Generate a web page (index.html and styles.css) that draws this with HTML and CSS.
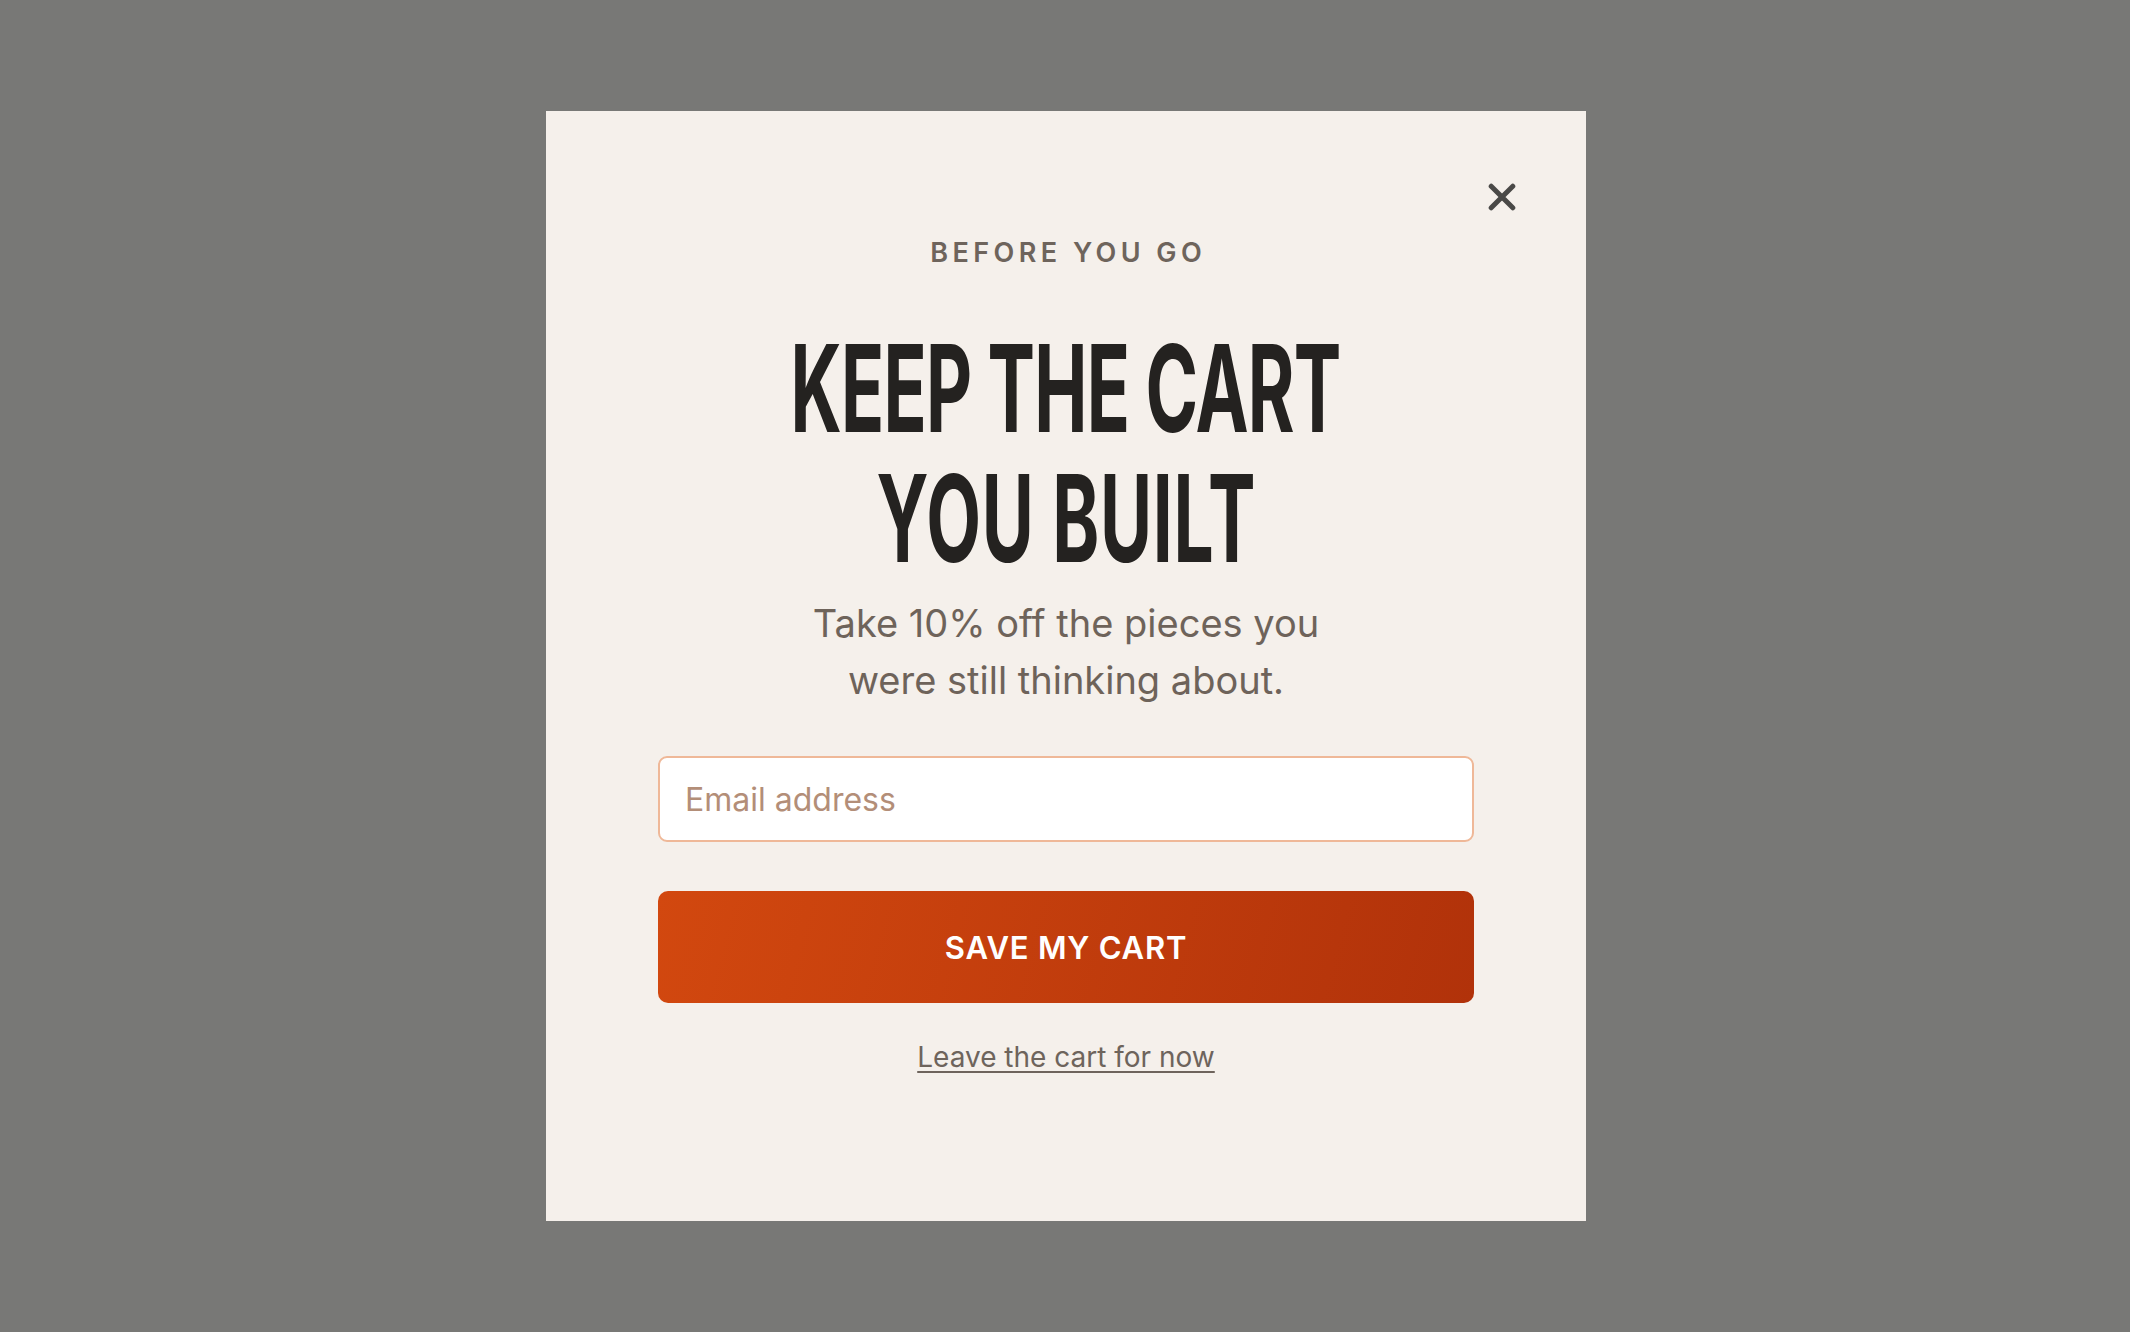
FILE: index.html
```html
<!DOCTYPE html>
<html lang="en">
<head>
<meta charset="utf-8">
<title>Keep the cart you built</title>
<link rel="stylesheet" href="styles.css">
</head>
<body>
<div class="overlay">
  <div class="modal" role="dialog" aria-labelledby="title">
    <button class="close" aria-label="Close">
      <svg width="28" height="28" viewBox="0 0 28 28" aria-hidden="true">
        <path d="M3.2 3.2 L24.8 24.8 M24.8 3.2 L3.2 24.8" stroke="#4a4947" stroke-width="5" stroke-linecap="round" fill="none"/>
      </svg>
    </button>
    <p class="eyebrow">BEFORE YOU GO</p>
    <h1 class="title" id="title"><span class="title-line">KEEP THE CART</span><span class="title-line title-line-2">YOU BUILT</span></h1>
    <p class="lead">Take 10% off the pieces you<br>were still thinking about.</p>
    <form class="form">
      <input class="email" type="email" placeholder="Email address">
      <button class="cta" type="button">SAVE MY CART</button>
    </form>
    <a class="dismiss" href="#">Leave the cart for now</a>
  </div>
</div>
</body>
</html>
```

FILE: styles.css
```css
html, body {
  margin: 0;
  padding: 0;
}
body {
  background: #787876;
  font-family: Inter, "Noto Sans", sans-serif;
}
.overlay {
  min-height: 100vh;
  display: flex;
  align-items: center;
  justify-content: center;
  padding-left: 2px;
  box-sizing: border-box;
}
.modal {
  position: relative;
  box-sizing: border-box;
  width: 1040px;
  height: 1110px;
  background: #f5f0eb;
  padding: 126px 112px 0;
  display: flex;
  flex-direction: column;
  align-items: center;
  text-align: center;
}
.close {
  position: absolute;
  top: 72px;
  right: 70px;
  width: 28px;
  height: 28px;
  padding: 0;
  border: 0;
  background: none;
  cursor: pointer;
  display: flex;
}
.eyebrow {
  margin: 0;
  font-size: 27px;
  line-height: 32px;
  font-weight: 600;
  letter-spacing: 0.165em;
  margin-right: -0.165em;
  color: #6e645c;
}
.title {
  margin: 54px 0 0;
  display: flex;
  flex-direction: column;
  align-items: center;
  font-size: 107px;
  line-height: 130px;
  font-weight: 700;
  color: #242220;
  letter-spacing: -0.01em;
}
.title-line {
  display: block;
  white-space: nowrap;
  transform: scale(0.665, 1.13);
}
.title-line-2 {
  letter-spacing: 0.01em;
}
.lead {
  margin: 12px 0 0;
  font-size: 38px;
  line-height: 57px;
  color: #6e635a;
}
.form {
  width: 100%;
  margin-top: 47px;
  display: flex;
  flex-direction: column;
  gap: 49px;
}
.email {
  box-sizing: border-box;
  width: 100%;
  height: 86px;
  border: 2px solid #efb898;
  border-radius: 9px;
  background: #ffffff;
  padding: 0 25px;
  font-family: Inter, "Noto Sans", sans-serif;
  font-size: 32px;
  color: #3a332e;
  outline: none;
}
.email::placeholder {
  color: #b38e78;
}
.cta {
  width: 100%;
  height: 112px;
  border: 0;
  border-radius: 10px;
  background: linear-gradient(105deg, #d2480f 0%, #b1320a 100%);
  color: #ffffff;
  font-family: Inter, "Noto Sans", sans-serif;
  font-size: 31px;
  font-weight: 600;
  letter-spacing: 0.025em;
  cursor: pointer;
}
.dismiss {
  margin-top: 37px;
  font-size: 28px;
  line-height: 34px;
  color: #6e645c;
  text-decoration: underline;
  text-decoration-thickness: 2px;
  text-underline-offset: 4px;
}
```
